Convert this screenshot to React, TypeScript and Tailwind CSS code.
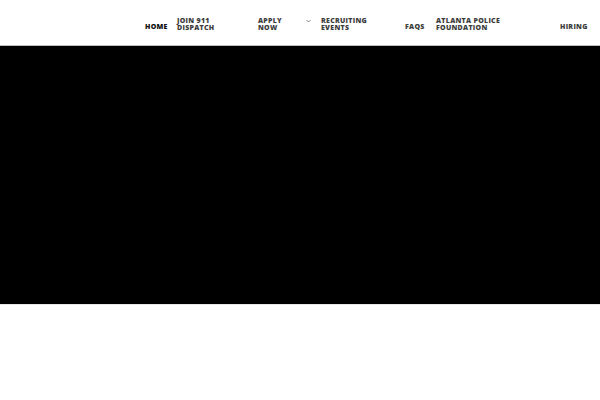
const items = [
  { label: ['HOME'], w: 'w-[32px]', active: true },
  { label: ['JOIN 911', 'DISPATCH'], w: 'w-[81px]' },
  { label: ['APPLY', 'NOW'], w: 'w-[63px]', caret: true },
  { label: ['RECRUITING', 'EVENTS'], w: 'w-[84px]' },
  { label: ['FAQS'], w: 'w-[31px]' },
  { label: ['ATLANTA POLICE', 'FOUNDATION'], w: 'w-[124px]' },
  { label: ['HIRING'], w: 'w-[30px]' },
];

function Caret() {
  return (
    <svg width="5" height="4" viewBox="0 0 5 4" className="absolute left-[48px] top-[-3px]">
      <path d="M0.5 1 L2.5 3 L4.5 1" fill="none" stroke="#777" strokeWidth="0.9" />
    </svg>
  );
}

export default function App() {
  return (
    <div className="w-[600px] h-[400px] bg-white overflow-hidden" style={{ fontFamily: '"Open Sans", sans-serif' }}>
      {/* Header */}
      <header className="h-[46px] border-b border-[#bdbdbd] flex items-center pl-[145px] pt-[7px]">
        <nav className="flex items-center">
          {items.map((item) => (
            <div key={item.label.join(' ')} className={`${item.w} relative`}>
              <p
                className={`text-[7px] leading-[7px] font-extrabold tracking-[0.04em] ${
                  item.active ? 'text-[#111]' : 'text-[#3d3d3d]'
                } ${item.label.length > 1 ? 'mt-[-5px]' : 'mt-[1px]'}`}
              >
                {item.label[0]}
                {item.label[1] && (
                  <>
                    <br />
                    {item.label[1]}
                  </>
                )}
              </p>
              {item.caret && <Caret />}
            </div>
          ))}
        </nav>
      </header>

      {/* Hero */}
      <div className="h-[259px] bg-black border-b border-[#e6e6e6]" />
    </div>
  );
}
